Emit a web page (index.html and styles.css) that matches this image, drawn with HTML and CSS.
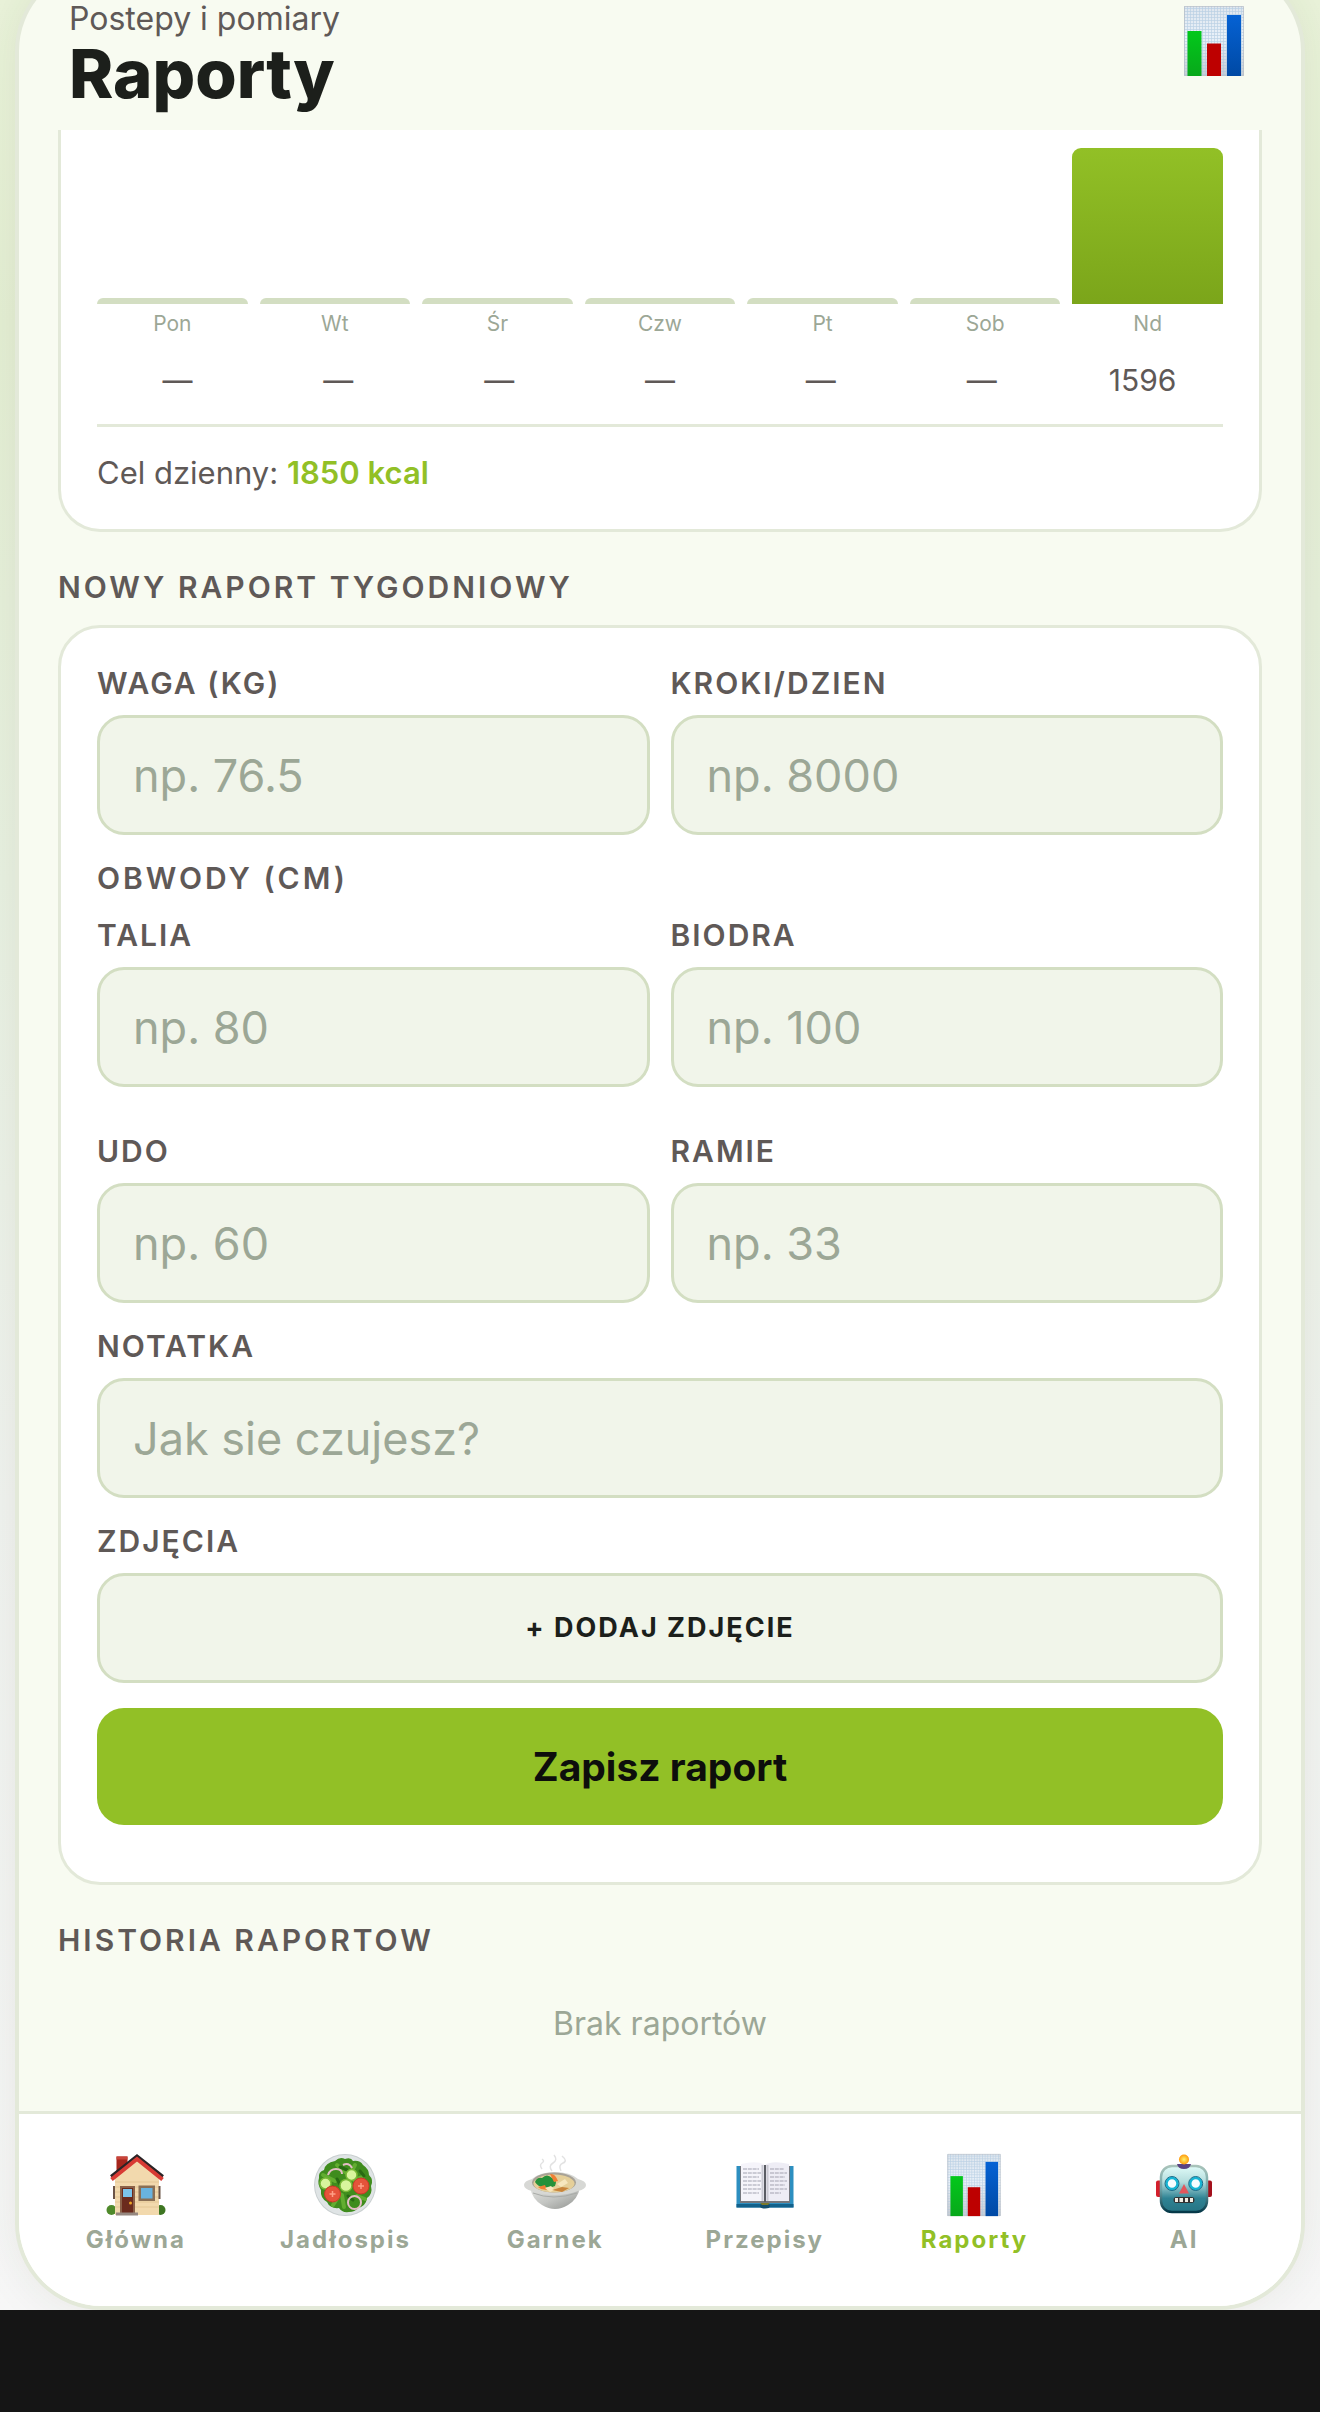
FILE: index.html
```html
<!DOCTYPE html>
<html lang="pl">
<head>
<meta charset="utf-8">
<meta name="viewport" content="width=device-width, initial-scale=1">
<title>Raporty</title>
<link rel="stylesheet" href="styles.css">
</head>
<body>
<svg class="defs" aria-hidden="true">
  <defs>
    <linearGradient id="paper" x1="0" y1="0" x2="0" y2="1"><stop offset="0" stop-color="#dfe6ee"/><stop offset=".45" stop-color="#e9f1f9"/><stop offset="1" stop-color="#c9ccd2"/></linearGradient>
    <linearGradient id="blue" x1="0" y1="0" x2="0" y2="1"><stop offset="0" stop-color="#0562d4"/><stop offset="1" stop-color="#0049a4"/></linearGradient>
    <linearGradient id="green" x1="0" y1="0" x2="0" y2="1"><stop offset="0" stop-color="#02c81b"/><stop offset="1" stop-color="#08a81b"/></linearGradient>
    <linearGradient id="bowl" x1="0" y1="0" x2="1" y2="1"><stop offset="0" stop-color="#e2e3e0"/><stop offset=".5" stop-color="#c3c5c2"/><stop offset="1" stop-color="#8f918e"/></linearGradient>
    <linearGradient id="steel" x1="0" y1="0" x2="0" y2="1"><stop offset="0" stop-color="#e0fbf8"/><stop offset=".35" stop-color="#b4dcdc"/><stop offset=".7" stop-color="#2f8394"/><stop offset="1" stop-color="#257383"/></linearGradient>
    <linearGradient id="rim" x1="0" y1="0" x2="0" y2="1"><stop offset="0" stop-color="#a9c3ba"/><stop offset=".5" stop-color="#6ba3a8"/><stop offset="1" stop-color="#043848"/></linearGradient>
    <radialGradient id="bulb"><stop offset="0" stop-color="#fff36b"/><stop offset="1" stop-color="#ff9a0c"/></radialGradient>
    <pattern id="mesh" width="3" height="3" patternUnits="userSpaceOnUse"><path d="M0 .5h3M.5 0v3" stroke="#a9c6de" stroke-width=".7" opacity=".7"/></pattern>
    <symbol id="i-chart" viewBox="0 0 72 72">
      <path d="M6 1h60v70H6z" fill="url(#paper)"/><path d="M6 1h60v70H6z" fill="url(#mesh)"/><path d="M6.500 1.500h59v69h-59z" fill="none" stroke="#b9bfc6" opacity=".7"/>
      <path d="M9.500 26h14v45h-14z" fill="url(#green)"/><path d="M29 38.500h14V71H29z" fill="#bd0000"/><path d="M49 10h14v61H49z" fill="url(#blue)"/>
    </symbol>
    <symbol id="i-house" viewBox="0 0 64 64">
      <path d="M12.500 3.500h11v13l-11 9z" fill="#a5251c"/><path d="M12.500 3.500h11v3h-11z" fill="#c9443a"/>
      <circle cx="7.500" cy="57" r="5" fill="#4f8a2b"/><circle cx="56.500" cy="57" r="5" fill="#3e7622"/>
      <path d="M11 24 33 6l22 18v38H11z" fill="#f2d9ad"/><path d="M11 29h44M11 34h44M11 39h44M11 44h44M11 49h44M11 54h44" stroke="#e3c695" stroke-width="1"/>
      <path d="M9 33h2v13H9zM54.500 33h2v13h-2z" fill="#6b5447"/>
      <path d="M7 23.500 33 3l26 20.500" fill="none" stroke="#2b2426" stroke-width="3"/>
      <path d="M7.500 26.500 33 6l25.500 20.500" fill="none" stroke="#d83b34" stroke-width="4"/>
      <path d="M16 33h15v27H16z" fill="#8a6148"/><path d="M18 35h11v25H18z" fill="#6b2b1d"/><path d="M19 36h9v8h-9z" fill="#7cc4ea"/><circle cx="26.500" cy="50" r="1.500" fill="#eda628"/>
      <path d="M34.500 32.500H51V48H34.500z" fill="#8a6f55"/><path d="M37 35h11.500v10.500H37z" fill="#69b3df"/><path d="M12 59.500h22v3H12z" fill="#968880"/>
    </symbol>
    <symbol id="i-salad" viewBox="0 0 64 64">
      <circle cx="32" cy="32" r="31" fill="#c9cfd0"/><circle cx="32" cy="32" r="30" fill="#dfe4e5"/>
      <path d="M22 8q5-5 10-2 6-2 8 2 7-1 10 4 6 4 6 10 5 5 2 11 2 8-4 12-1 8-9 10-3 4-9 4-7 1-10-4-9 1-12-6-7-4-6-12-4-6-2-12-1-6 5-8 1-7 11-9z" fill="#3f8c1d"/>
      <path d="M24 12l8 7M42 12l-5 9M10 22l12 6M50 24l-9 3M20 52l7-11M31 54l-2-12M52 46l-8-3" stroke="#62ad30" stroke-width="4" stroke-linecap="round"/>
      <path d="M27 14l7 3M15 36l5-2M35 43l5 4M47 18l4 5M24 26l5 9" stroke="#286b13" stroke-width="3" stroke-linecap="round"/>
      <g fill="#d8f59d" stroke="#79b937" stroke-width="1.500"><circle cx="12.500" cy="30.500" r="5.500"/><circle cx="38.500" cy="22" r="5.500"/><circle cx="33" cy="32.500" r="6"/></g>
      <g fill="#e5533a" stroke="#c93a27"><circle cx="19.500" cy="41" r="8"/><circle cx="48" cy="33" r="8"/></g>
      <path d="M16.500 41h6M19.500 38v6M45 33h6M48 30v6" stroke="#ff9f86" stroke-width="1.500"/>
      <g fill="none" stroke="#e3bcc4" stroke-width="2"><circle cx="41.500" cy="49.500" r="6.500"/><path d="M15 22q2-6 8-6t6 5M30 12q6-3 9 3"/></g>
    </symbol>
    <symbol id="i-soup" viewBox="0 0 64 64">
      <path d="M19 16q-3-4 0-6t0-4M29 18q-4-5 1-8t1-8M38 18q-3-6 2-8t-1-7" fill="none" stroke="#e2e2e2" stroke-width="1.500"/>
      <path d="M7 34q2 12 12 18 13 8 26 0 10-6 12-18z" fill="url(#bowl)"/>
      <path d="M9 26q-8 2-8 6t8 6q10 4 23 4t23-4q8-2 8-6t-8-6q-8-7-23-7T9 26z" fill="#d7d8d5"/>
      <ellipse cx="31" cy="29.500" rx="22" ry="10" fill="#a8a296"/><ellipse cx="31" cy="30.500" rx="20.500" ry="9" fill="#e5cf99"/>
      <path d="M12 29q2-5 7-4 5-5 10 0 6 2 3 8-6 3-11 1-5 1-9-5z" fill="#25913a"/><path d="M27 21q5-1 8 7l-4 1zM15 34l7-2 2 5-6-1z" fill="#f07f35"/>
      <path d="M34 31l8-5 3 4-7 4zM22 35l6-2 4 4-5 2z" fill="#f7e7be"/><path d="M29 37l10-3 7 1-7 4z" fill="#c9853b"/><path d="M10 40q20 8 44 0" fill="none" stroke="#a9aba8" stroke-width="1"/>
    </symbol>
    <symbol id="i-book" viewBox="0 0 64 64">
      <path d="M3.500 13h57v41.500h-57z" fill="#2d8fc0"/><path d="M3.500 51h57v3.500h-57z" fill="#12618b"/>
      <path d="M7 13h50v37H7z" fill="#74777d"/>
      <path d="M8 11q17-4 24 1v36H8z" fill="#f5f4fa"/><path d="M56 11q-17-4-24 1v36h24z" fill="#eeedf5"/>
      <path d="M29.500 12v36M34.500 12v36" stroke="#c9c9d2" stroke-width="2"/><path d="M32 12v37" stroke="#5b5d64" stroke-width="2"/>
      <path d="M10 16h16M10 20h18M10 24h16M10 28h18M10 32h17M10 36h18M10 40h16M37 16h14M37 20h17M37 24h15M37 28h17M37 32h15M37 36h17M37 40h11" stroke="#a2a2b0" stroke-width="1.200" stroke-dasharray="4 .8"/>
      <ellipse cx="32" cy="53" rx="5" ry="2.500" fill="#124e6d"/><path d="M27 50h10l-2 2h-6z" fill="#7b7929"/>
    </symbol>
    <symbol id="i-robot" viewBox="0 0 64 64">
      <rect x="4" y="27.500" width="7" height="16.500" rx="2" fill="#d31f2b"/><rect x="53" y="27.500" width="7" height="16.500" rx="2" fill="#a3101c"/>
      <rect x="9" y="13" width="46" height="46" rx="11" fill="url(#steel)" stroke="url(#rim)" stroke-width="2.500"/>
      <path d="M25 11h14q-1 5-7 5t-7-5z" fill="#5b4382"/><circle cx="32" cy="6.500" r="5" fill="url(#bulb)"/>
      <g fill="#f6fdff" stroke-width="2.500"><circle cx="20" cy="30.500" r="5.500" stroke="#16b5d4"/><circle cx="43.700" cy="30.500" r="5.500" stroke="#16b5d4"/></g>
      <g fill="none" stroke="#1a6d8b" stroke-width="1"><circle cx="20" cy="30.500" r="7"/><circle cx="43.700" cy="30.500" r="7"/></g>
      <path d="M32 31l5 9.500H27z" fill="#e2565c"/>
      <rect x="21.500" y="44" width="21" height="6" rx="3" fill="#333"/><path d="M23 47h3M27.500 47h3.500M33 47h3M38 47h3" stroke="#f2eee4" stroke-width="4"/>
    </symbol>
  </defs>
</svg>

<div class="stage">
  <div class="phone">
    <header class="top">
      <div>
        <p class="top-sub">Postepy i pomiary</p>
        <h1 class="top-title">Raporty</h1>
      </div>
      <svg class="top-icon" role="img" aria-label="Wykres"><use href="#i-chart"/></svg>
    </header>

    <main class="content">
      <section class="card card-chart">
        <div class="bars">
          <div class="day"><div class="bar"></div>Pon</div>
          <div class="day"><div class="bar"></div>Wt</div>
          <div class="day"><div class="bar"></div>Śr</div>
          <div class="day"><div class="bar"></div>Czw</div>
          <div class="day"><div class="bar"></div>Pt</div>
          <div class="day"><div class="bar"></div>Sob</div>
          <div class="day"><div class="bar bar-full"></div>Nd</div>
        </div>
        <div class="values"><span>—</span><span>—</span><span>—</span><span>—</span><span>—</span><span>—</span><span>1596</span></div>
        <p class="goal">Cel dzienny: <strong>1850 kcal</strong></p>
      </section>

      <h2 class="section-title">Nowy raport tygodniowy</h2>
      <form class="card card-form">
        <div class="pair">
          <div class="field"><label for="waga">Waga (kg)</label><input id="waga" type="text" placeholder="np. 76.5"></div>
          <div class="field"><label for="kroki">Kroki/dzien</label><input id="kroki" type="text" placeholder="np. 8000"></div>
        </div>
        <div class="group" role="group" aria-labelledby="obwody">
          <h3 class="section-title group-title" id="obwody">Obwody (cm)</h3>
          <div class="pair">
            <div class="field"><label for="talia">Talia</label><input id="talia" type="text" placeholder="np. 80"></div>
            <div class="field"><label for="biodra">Biodra</label><input id="biodra" type="text" placeholder="np. 100"></div>
            <div class="field"><label for="udo">Udo</label><input id="udo" type="text" placeholder="np. 60"></div>
            <div class="field"><label for="ramie">Ramie</label><input id="ramie" type="text" placeholder="np. 33"></div>
          </div>
        </div>
        <div class="field"><label for="notatka">Notatka</label><input id="notatka" type="text" placeholder="Jak sie czujesz?"></div>
        <div class="field"><label for="zdjecia">Zdjęcia</label><button class="btn-add" id="zdjecia" type="button">+ DODAJ ZDJĘCIE</button></div>
        <button class="btn-save" type="submit">Zapisz raport</button>
      </form>

      <h2 class="section-title">Historia raportow</h2>
      <p class="empty">Brak raportów</p>
    </main>

    <nav class="tabs">
      <a class="tab" href="#glowna"><svg class="tab-icon" aria-hidden="true"><use href="#i-house"/></svg>Główna</a>
      <a class="tab" href="#jadlospis"><svg class="tab-icon" aria-hidden="true"><use href="#i-salad"/></svg>Jadłospis</a>
      <a class="tab" href="#garnek"><svg class="tab-icon" aria-hidden="true"><use href="#i-soup"/></svg>Garnek</a>
      <a class="tab" href="#przepisy"><svg class="tab-icon" aria-hidden="true"><use href="#i-book"/></svg>Przepisy</a>
      <a class="tab tab-active" href="#raporty" aria-current="page"><svg class="tab-icon" aria-hidden="true"><use href="#i-chart"/></svg>Raporty</a>
      <a class="tab" href="#ai"><svg class="tab-icon" aria-hidden="true"><use href="#i-robot"/></svg>AI</a>
    </nav>
  </div>
</div>
</body>
</html>
```
FILE: styles.css
```css
:root {
  --line: #e3e9d9;
  --field-line: #d3dec2;
  --field: #f1f5ea;
  --muted: #9ca796;
  --text: #5f5957;
  --ink: #1c1f1b;
  --accent: #92c026;
}

*, *::before, *::after { box-sizing: border-box; }

html { background: #151515; }

body {
  margin: 0;
  color: var(--text);
  font: 400 32px/40px Inter, "Liberation Sans", sans-serif;
}

h1, h2, h3, p { margin: 0; }

.defs { display: block; width: 0; height: 0; }

.stage {
  padding: 0 15px;
  margin-bottom: 102px;
  overflow: hidden;
  background: linear-gradient(180deg, #eaf3da 0%, #e5efd4 14%, #e9f1e2 38%, #f1f3f0 65%, #f7f7f7 100%);
}

.phone {
  margin-top: -36px;
  border: 4px solid var(--line);
  border-radius: 87px;
  background: #f8fbf1;
  box-shadow: 0 0 48px rgba(40, 50, 30, .08);
  overflow: hidden;
}

.top {
  display: flex;
  justify-content: space-between;
  align-items: flex-start;
  padding: 34px 51px 20px 50px;
}

.top-sub {
  margin-bottom: 2px;
  line-height: 34px;
}

.top-title {
  color: var(--ink);
  font-size: 67px;
  font-weight: 800;
  line-height: 72px;
}

.top-icon { width: 72px; height: 72px; margin-top: 3px; }

.content { padding: 0 39px 67px; }

.card {
  border: 3px solid var(--line);
  border-radius: 42px;
  background: #fff;
}

.card-chart {
  padding: 18px 36px 36px;
  border-top: 0;
  border-radius: 0 0 42px 42px;
}

.bars {
  display: grid;
  grid-template-columns: repeat(7, 1fr);
  align-items: end;
  gap: 12px;
}

.day {
  color: var(--muted);
  font-size: 21px;
  line-height: 24px;
  text-align: center;
}

.bar {
  height: 6px;
  margin-bottom: 8px;
  border-radius: 6px 6px 0 0;
  background: var(--field-line);
}

.bar-full {
  height: 156px;
  border-radius: 9px 9px 0 0;
  background: linear-gradient(180deg, #92c026, #7ba51a);
}

.values {
  display: grid;
  grid-template-columns: repeat(7, 1fr);
  padding: 26px 0;
  border-bottom: 3px solid var(--line);
  font-size: 30px;
  line-height: 36px;
  text-align: center;
}

.goal {
  padding-top: 26px;
  font-size: 31px;
}
.goal strong { color: var(--accent); font-weight: 600; }

.section-title {
  padding: 37px 0 20px;
  font-size: 30px;
  font-weight: 600;
  line-height: 36px;
  letter-spacing: 3px;
  text-transform: uppercase;
}

.card-form {
  display: flex;
  flex-direction: column;
  gap: 25px;
  padding: 37px 36px 57px;
}

.group-title { padding: 0 0 21px; }

.pair {
  display: grid;
  grid-template-columns: 1fr 1fr;
  gap: 46px 21px;
}

.field { display: flex; flex-direction: column; gap: 14px; min-width: 0; }

.field label {
  font-size: 30px;
  font-weight: 600;
  line-height: 36px;
  letter-spacing: 2px;
  text-transform: uppercase;
}

.field input {
  width: 100%;
  height: 120px;
  padding: 0 33px;
  border: 3px solid var(--field-line);
  border-radius: 27px;
  background: var(--field);
  color: var(--ink);
  font: inherit;
  font-size: 45px;
}

.field input::placeholder { color: var(--muted); opacity: 1; }

button { font: inherit; cursor: pointer; }

.btn-add {
  height: 110px;
  border: 3px solid var(--field-line);
  border-radius: 27px;
  background: var(--field);
  color: var(--ink);
  font-size: 27px;
  font-weight: 700;
  letter-spacing: 2px;
}

.btn-save {
  height: 117px;
  border: 0;
  border-radius: 27px;
  background: var(--accent);
  color: #0d0e0c;
  font-size: 39px;
  font-weight: 700;
}

.empty {
  padding-top: 26px;
  color: var(--muted);
  text-align: center;
}

.tabs {
  display: grid;
  grid-template-columns: repeat(6, 1fr);
  padding: 39px 12px 51px;
  border-top: 3px solid var(--line);
  background: #fff;
}

.tab {
  display: flex;
  flex-direction: column;
  align-items: center;
  gap: 8px;
  color: var(--muted);
  font-size: 24px;
  font-weight: 700;
  line-height: 30px;
  letter-spacing: 2px;
  text-decoration: none;
}

.tab-active { color: var(--accent); }
.tab-icon { width: 64px; height: 64px; }
```
